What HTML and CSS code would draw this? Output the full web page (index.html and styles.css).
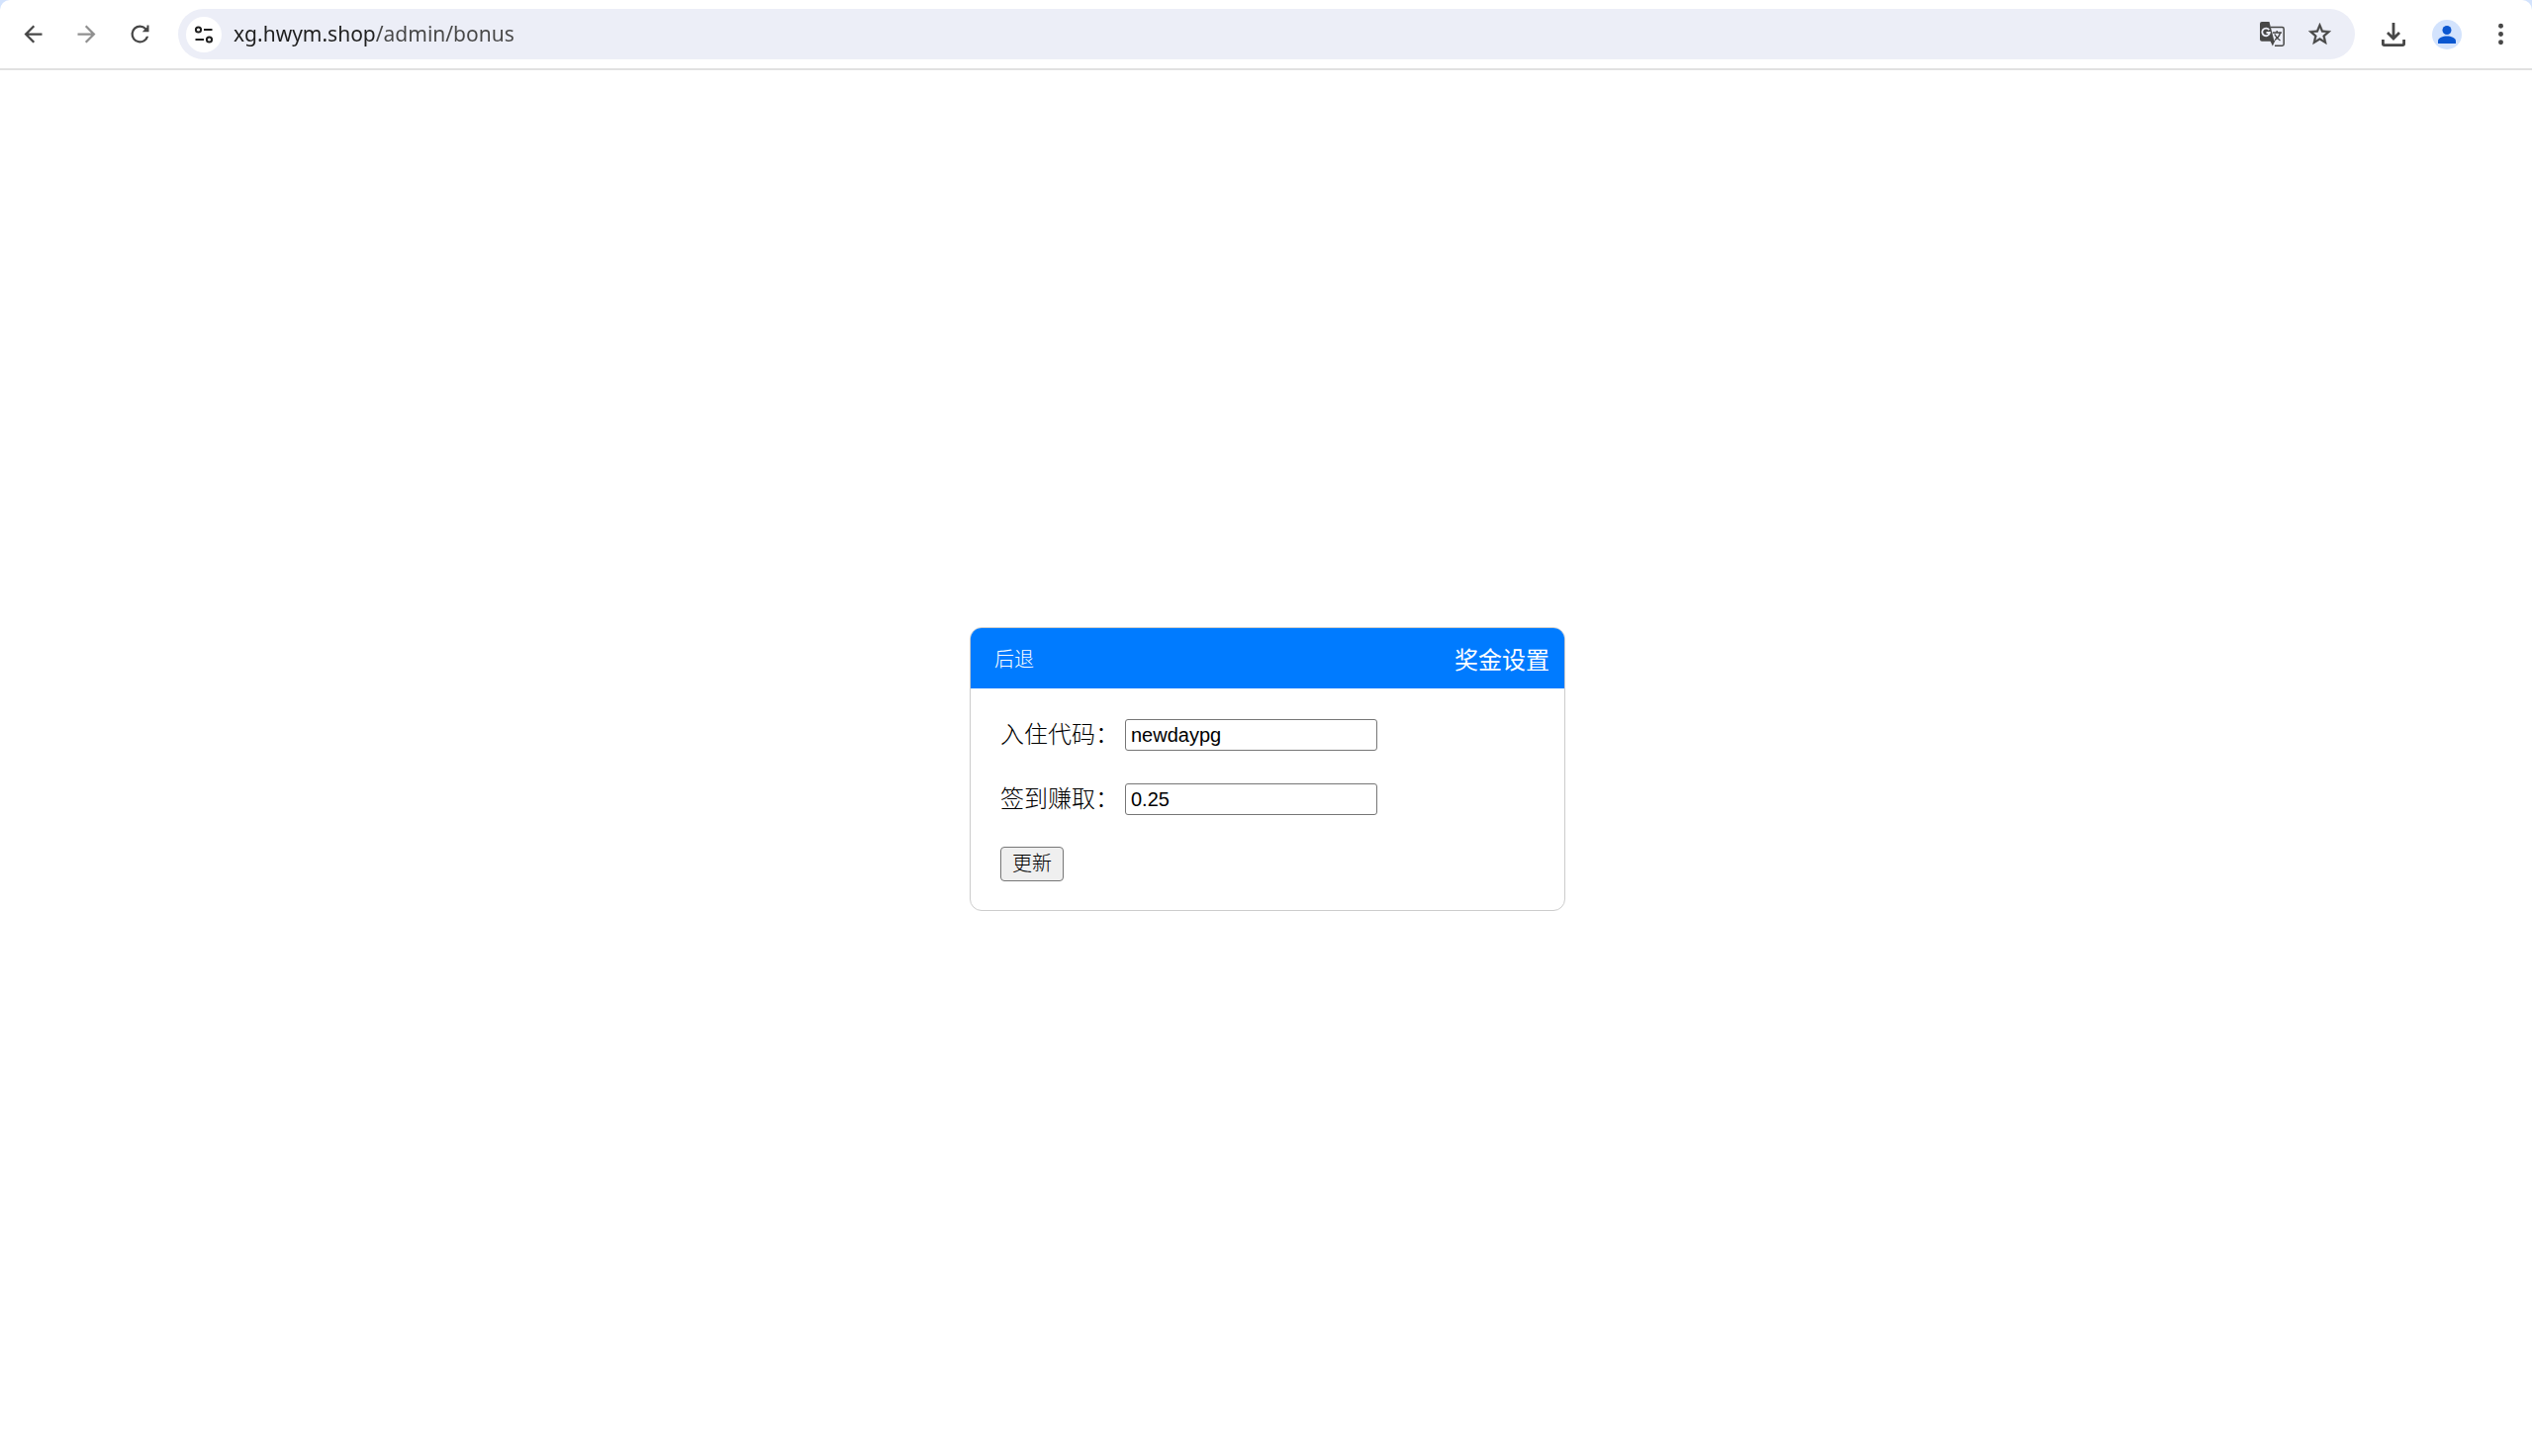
FILE: index.html
```
<!DOCTYPE html>
<html lang="zh-CN">
<head>
  <meta charset="UTF-8" />
  <meta name="viewport" content="width=device-width, initial-scale=1.0">
  <title>奖金设置</title>
  <link rel="stylesheet" href="styles.css">
</head>
<body>

  <div class="frame">
    <header class="toolbar">
      <button class="tool-btn" type="button" aria-label="Back">
        <svg class="icon" viewBox="0 0 24 24"><path d="M20 11H7.83l5.59-5.59L12 4l-8 8 8 8 1.41-1.41L7.83 13H20z"/></svg>
      </button>
      <button class="tool-btn disabled" type="button" aria-label="Forward" disabled>
        <svg class="icon" viewBox="0 0 24 24"><path d="M12 4l-1.41 1.41L16.17 11H4v2h12.17l-5.58 5.59L12 20l8-8z"/></svg>
      </button>
      <button class="tool-btn" type="button" aria-label="Reload">
        <svg class="icon" viewBox="0 0 24 24"><path d="M17.65 6.35A7.96 7.96 0 0 0 12 4a8 8 0 1 0 7.73 10h-2.08A6 6 0 1 1 12 6c1.66 0 3.14.69 4.22 1.78L14 10h6V4h-1.8v1.8z"/></svg>
      </button>

      <div class="omnibox">
        <button class="site-info" type="button" aria-label="Site information">
          <svg class="icon-site" viewBox="0 0 20 20" fill="none" stroke="#1f1f1f" stroke-width="2">
            <circle cx="4.5" cy="5" r="2.6"/><path d="M10 5h8.5M1.5 15H10"/><circle cx="15.5" cy="15" r="2.6"/>
          </svg>
        </button>
        <input class="url" type="text" value="xg.hwym.shop/admin/bonus" aria-label="Address" spellcheck="false">
        <button class="omni-btn" type="button" aria-label="Translate">
          <svg class="icon-translate" viewBox="0 0 25 25">
            <path d="M11 5.5h11.5a1.7 1.7 0 0 1 1.7 1.7v15.3a1.7 1.7 0 0 1-1.7 1.7H15" fill="none" stroke="#474747" stroke-width="1.5"/>
            <path d="M2 0h7.5l5 19.700H2a2 2 0 0 1-2-2V2a2 2 0 0 1 2-2z" fill="#474747"/>
            <path d="M10.300 19h5.200l-2.700 5.500z" fill="#474747"/>
            <path d="M9.300 8.300A3.800 3.800 0 1 0 9.900 11H6.500" fill="none" stroke="#eceef7" stroke-width="1.800"/>
            <path d="M13 11h9M17.200 9v2M20.500 11c-.8 3.300-3 5.800-5.500 7.500M14.800 12.500c1.200 2.600 3.300 4.800 5.700 6.500" fill="none" stroke="#474747" stroke-width="1.400"/>
          </svg>
        </button>
        <button class="omni-btn" type="button" aria-label="Bookmark">
          <svg class="icon" viewBox="0 0 24 24" stroke="#474747" stroke-width=".4"><path d="M22 9.24l-7.19-.62L12 2 9.19 8.63 2 9.24l5.46 4.73L5.82 21 12 17.27 18.18 21l-1.63-7.03zM12 15.4l-3.76 2.27 1-4.28-3.32-2.88 4.38-.38L12 6.1l1.71 4.04 4.38.38-3.32 2.88 1 4.28z"/></svg>
        </button>
      </div>

      <button class="tool-btn" type="button" aria-label="Downloads">
        <svg class="icon-download" viewBox="0 0 24 24" fill="none" stroke="#474747" stroke-width="2.8">
          <path d="M12 0v16M6 10l6 6 6-6M1.400 17v4.300a1.300 1.300 0 0 0 1.300 1.300h18.600a1.300 1.300 0 0 0 1.300-1.300V17"/>
        </svg>
      </button>
      <button class="tool-btn" type="button" aria-label="Profile">
        <svg class="icon-profile" viewBox="0 0 30 30">
          <circle cx="15" cy="15" r="15" fill="#d3e3fd"/>
          <circle cx="15" cy="10.5" r="4.5" fill="#0b57d0"/>
          <path d="M6 24v-2.5c0-3.3 5-5 9-5s9 1.7 9 5V24z" fill="#0b57d0"/>
        </svg>
      </button>
      <button class="tool-btn" type="button" aria-label="Menu">
        <svg class="icon" viewBox="0 0 24 24"><circle cx="12" cy="4.7" r="2.2"/><circle cx="12" cy="12" r="2.2"/><circle cx="12" cy="19.3" r="2.2"/></svg>
      </button>
    </header>
  </div>

  <main class="page">
    <section class="container">
      <div class="header">
        <button class="back-btn" type="button">后退</button>
        <h1>奖金设置</h1>
      </div>
      <form class="content">
        <div class="field">
          <label for="code">入住代码：</label>
          <input type="text" id="code" name="code" value="newdaypg" spellcheck="false">
        </div>
        <div class="field">
          <label for="earn">签到赚取：</label>
          <input type="text" id="earn" name="earn" value="0.25">
        </div>
        <button class="update-btn" type="button">更新</button>
      </form>
    </section>
  </main>

</body>
</html>
```

FILE: styles.css
```
* {
  margin: 0;
  padding: 0;
  box-sizing: border-box;
}

body {
  display: flex;
  flex-direction: column;
  min-height: 100vh;
  font-family: "Liberation Sans", "Noto Sans CJK SC", sans-serif;
  font-size: 24px;
  font-weight: 300;
  color: #000;
  background: #fff;
}

/* browser toolbar */
.frame {
  background: #d3e3fd;
}

.toolbar {
  display: flex;
  align-items: center;
  height: 71px;
  padding: 0 5px 0 6px;
  background: #fff;
  border-bottom: 2px solid #e1e1e1;
  border-radius: 10px 10px 0 0;
}

.toolbar button {
  display: flex;
  align-items: center;
  justify-content: center;
  flex: none;
  border: none;
  background: none;
}

.tool-btn {
  width: 54px;
  height: 51px;
}

.tool-btn.disabled {
  opacity: 0.6;
}

.icon {
  width: 27px;
  height: 27px;
  fill: #474747;
}

.icon-site {
  width: 20px;
  height: 20px;
}

.icon-translate {
  width: 25px;
  height: 25px;
}

.icon-download {
  width: 24px;
  height: 24px;
}

.icon-profile {
  width: 30px;
  height: 30px;
}

.omnibox {
  display: flex;
  align-items: center;
  flex: 1;
  height: 51px;
  margin: 0 12px;
  padding: 0 12px 0 8px;
  border-radius: 26px;
  background: #eceef7;
}

.toolbar .site-info {
  width: 36px;
  height: 36px;
  border-radius: 50%;
  background: #fff;
}

/* host is dark, path is dimmed */
.url {
  flex: 1;
  min-width: 0;
  height: 36px;
  margin-left: 12px;
  padding-bottom: 2px;
  border: none;
  outline: none;
  font-family: "Noto Sans", sans-serif;
  font-size: 21px;
  color: transparent;
  background: linear-gradient(to right, #1f1f1f 143px, #474747 143px);
  -webkit-background-clip: text;
  background-clip: text;
}

.omni-btn {
  width: 48px;
  height: 36px;
}

/* settings card */
.page {
  display: flex;
  flex: 1;
  align-items: center;
  justify-content: center;
  padding: 11px 0 0 3px;
}

.container {
  width: 602px;
  max-width: 100%;
  border: 1px solid #ccc;
  border-radius: 12px;
  overflow: hidden;
}

.header {
  display: flex;
  align-items: center;
  justify-content: space-between;
  height: 61px;
  padding: 0 15px;
  background: #007bff;
  color: #fff;
}

.header h1 {
  font-size: 24px;
  font-weight: 400;
}

.back-btn {
  padding: 0 9px;
  border: none;
  background: none;
  color: #fff;
  font: inherit;
  font-size: 20px;
  cursor: pointer;
}

.content {
  padding: 30px 30px 29px;
}

.field {
  display: flex;
  align-items: center;
  gap: 6px;
  height: 35px;
  margin-bottom: 30px;
}

.field label {
  padding-bottom: 5px;
}

.field input {
  width: 255px;
  height: 32px;
  padding: 1px 5px;
  border: 1px solid #767676;
  border-radius: 3px;
  font: inherit;
  font-size: 20px;
  background: #fff;
}

.update-btn {
  display: block;
  width: 64px;
  height: 35px;
  border: 1px solid #767676;
  border-radius: 4px;
  background: #efefef;
  font: inherit;
  font-size: 20px;
  line-height: 30px;
  cursor: pointer;
}
```
